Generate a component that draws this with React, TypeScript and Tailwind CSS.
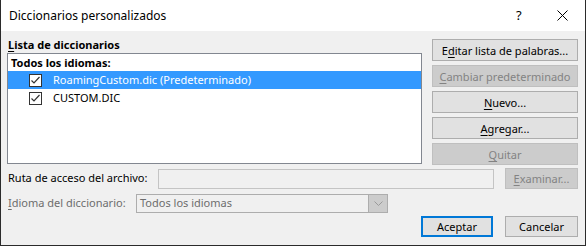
import React from "react";

const font = { fontFamily: '"Noto Sans", "Open Sans", sans-serif' };

function U({ children }: { children: React.ReactNode }) {
  return <span className="underline underline-offset-[2px] decoration-1">{children}</span>;
}

function Btn({
  children,
  disabled,
  className = "",
}: {
  children: React.ReactNode;
  disabled?: boolean;
  className?: string;
}) {
  return (
    <div
      className={
        "shrink-0 flex items-center justify-center border text-[11px] leading-none whitespace-nowrap " +
        (disabled
          ? "bg-[#cccccc] border-[#bfbfbf] text-[#838383] "
          : "bg-[#e1e1e1] border-[#adadad] text-black ") +
        className
      }
    >
      {children}
    </div>
  );
}

function Check() {
  return (
    <div className="w-[13px] h-[13px] border border-[#333333] bg-white flex items-center justify-center">
      <svg width="11" height="11" viewBox="0 0 11 11">
        <path d="M1.5 5.5 L4 8 L9.5 2" fill="none" stroke="#333333" strokeWidth="1.2" />
      </svg>
    </div>
  );
}

export default function App() {
  return (
    <div
      className="w-[586px] h-[246px] bg-[#f0f0f0] border-l border-r border-b border-[#2b2b2b] flex flex-col text-black whitespace-nowrap"
      style={font}
    >
      {/* Title bar */}
      <div className="shrink-0 h-[31px] bg-white flex items-center pl-[8px] pr-[17px] text-[12px]">
        <span className="flex-1">Diccionarios personalizados</span>
        <span className="w-[10px] text-[13px] mr-[31px]">?</span>
        <svg width="11" height="11" viewBox="0 0 11 11">
          <path d="M0.5 0.5 L10.5 10.5 M10.5 0.5 L0.5 10.5" stroke="#000" strokeWidth="1" />
        </svg>
      </div>

      {/* Body */}
      <div className="shrink-0 flex pl-[6px] pr-[7px]">
        <div className="w-[415px] flex flex-col pt-[6px]">
          <div className="h-[16px] text-[11px] font-bold leading-[16px] pl-[1px]">
            <U>L</U>ista de diccionarios
          </div>
          <div className="h-[111px] border border-[#828790] bg-white flex flex-col text-[11px]">
            <div className="h-[17px] pl-[3px] font-bold leading-[17px]">Todos los idiomas:</div>
            <div className="h-[18px] bg-[#3399ff] flex items-center text-white">
              <div className="ml-[21px] mr-[11px]">
                <Check />
              </div>
              <span>RoamingCustom.dic (Predeterminado)</span>
            </div>
            <div className="h-[18px] flex items-center">
              <div className="ml-[21px] mr-[11px]">
                <Check />
              </div>
              <span>CUSTOM.DIC</span>
            </div>
          </div>
        </div>
        <div className="ml-[10px] w-[146px] flex flex-col gap-[4px] pt-[8px]">
          <Btn className="h-[22px]">
            E<U>d</U>itar lista de palabras...
          </Btn>
          <Btn className="h-[22px]" disabled>
            <U>C</U>ambiar predeterminado
          </Btn>
          <Btn className="h-[22px]">
            <U>N</U>uevo...
          </Btn>
          <Btn className="h-[22px]">
            <U>A</U>gregar...
          </Btn>
          <Btn className="h-[22px]" disabled>
            <U>Q</U>uitar
          </Btn>
        </div>
      </div>

      {/* Path row */}
      <div className="shrink-0 flex items-center pl-[7px] pr-[7px] mt-[3px] text-[11px]">
        <span className="w-[150px]">Ruta de acceso del archivo:</span>
        <div className="w-[337px] h-[20px] border border-[#c4c4c4] bg-[#f0f0f0]" />
        <Btn className="ml-[11px] w-[73px] h-[21px]" disabled>
          <U>E</U>xaminar...
        </Btn>
      </div>

      {/* Language row */}
      <div className="shrink-0 flex items-center pl-[7px] mt-[5px] text-[11px]">
        <span className="w-[128px] text-[#6d6d6d]">
          <U>I</U>dioma del diccionario:
        </span>
        <div className="w-[252px] h-[19px] border border-[#adadad] bg-[#f0f0f0] flex items-center">
          <span className="flex-1 pl-[3px] text-[#6d6d6d]">Todos los idiomas</span>
          <div className="w-[19px] h-full bg-[#cccccc] border-l border-[#adadad] flex items-center justify-center">
            <svg width="9" height="5" viewBox="0 0 9 5">
              <path d="M0.5 0.5 L4.5 4.5 L8.5 0.5" fill="none" stroke="#9a9a9a" strokeWidth="1" />
            </svg>
          </div>
        </div>
      </div>

      {/* Footer buttons */}
      <div className="shrink-0 flex justify-end pr-[7px] mt-[3px] gap-[12px]">
        <Btn className="w-[72px] h-[21px] !border-2 !border-[#0078d7]">Aceptar</Btn>
        <Btn className="w-[73px] h-[21px]">Cancelar</Btn>
      </div>
    </div>
  );
}
